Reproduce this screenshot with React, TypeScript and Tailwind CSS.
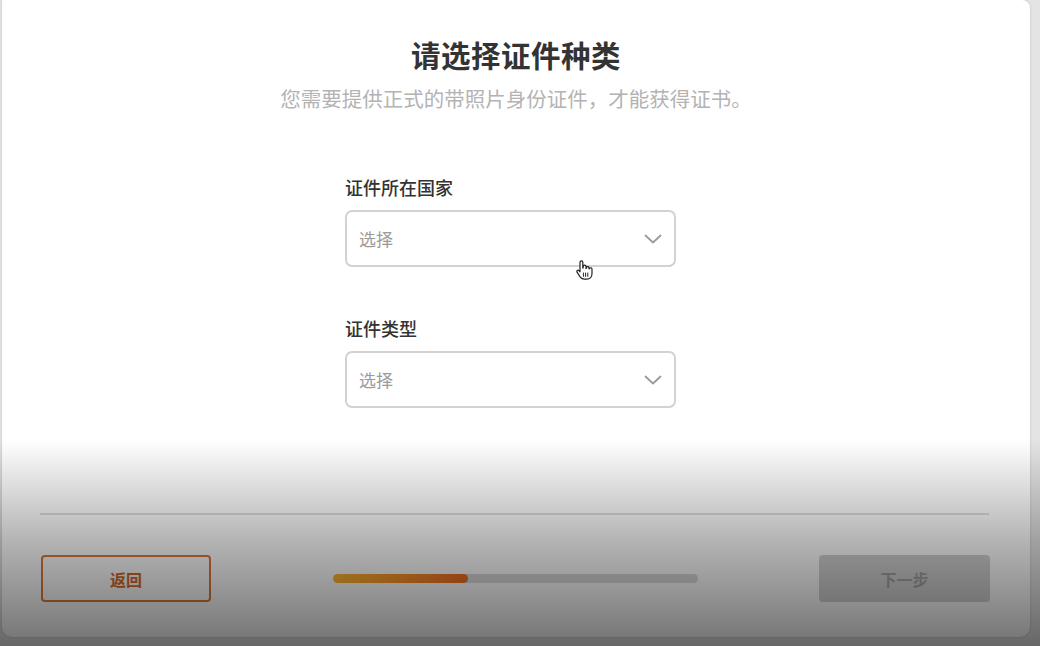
import React from "react";

const font = { fontFamily: '"Noto Sans CJK SC", "Noto Sans", sans-serif' };

const Chevron = () => (
  <svg width="18" height="10" viewBox="0 0 18 10" fill="none">
    <path d="M1.5 1.5L9 8.5L16.5 1.5" stroke="#9a9a9a" strokeWidth="1.8" strokeLinecap="round" strokeLinejoin="round" />
  </svg>
);

interface ISelectField {
  label: string;
}

const SelectField = ({ label }: ISelectField) => {
  return (
    <div className="flex flex-col">
      <label className="text-[18px] leading-[22px] text-[#333] font-medium">{label}</label>
      <div className="mt-[12px] h-[57px] w-[331px] rounded-[7px] border-2 border-[#d2d2d2] flex items-center justify-between pl-[12px] pr-[12px]">
        <span className="text-[17px] text-[#9b9b9b]">选择</span>
        <Chevron />
      </div>
    </div>
  );
};

const HandCursor = () => (
  <svg width="18" height="22" viewBox="0 0 18 22" fill="none">
    <path
      d="M5 10V3.2a1.4 1.4 0 0 1 2.8 0V9h.4V7.6a1.4 1.4 0 0 1 2.8 0V9.4h.3V8.6a1.4 1.4 0 0 1 2.7 0v1.2h.3a1.4 1.4 0 0 1 2.7 0v4.8c0 3.2-2 5.6-5.2 5.6H9.4c-2 0-3.2-.9-4.3-2.4L2 13.2a1.3 1.3 0 0 1 2-1.6L5 12.8z"
      fill="#fff"
      stroke="#222"
      strokeWidth="1.2"
      strokeLinejoin="round"
    />
    <path d="M8.4 14v3.4M10.6 14v3.4M12.8 14v3.4" stroke="#222" strokeWidth="1" strokeLinecap="round" />
  </svg>
);

export default function App() {
  return (
    <div className="relative w-[1040px] h-[646px] overflow-hidden bg-[#e4e4e4] pl-[2px] pr-[10px] pb-[9px]" style={font}>
      <div className="relative h-full bg-white rounded-b-[10px] rounded-tr-[8px] shadow-[0_0_3px_rgba(0,0,0,0.15)] flex flex-col">
        <div className="flex flex-col items-center pt-[34px]">
          <h1 className="text-[29.5px] leading-[40px] font-bold text-[#333] tracking-[0.5px]">请选择证件种类</h1>
          <p className="mt-[10px] text-[20.5px] leading-[28px] text-[#b3b3b3]">
            您需要提供正式的带照片身份证件，才能获得证书。
          </p>
        </div>

        <div className="ml-[343px] mt-[64px] flex flex-col gap-[50px]">
          <SelectField label="证件所在国家" />
          <SelectField label="证件类型" />
        </div>

        <div className="mt-auto ml-[38px] mr-[41px] border-t-2 border-[#e0e0e0]" />
        <div className="flex items-center justify-between pl-[39px] pr-[40px] pt-[40px] pb-[35px]">
          <button className="w-[170px] h-[47px] rounded-[4px] border-2 border-[#dd7a3a] text-[#d26a2c] text-[16px] font-semibold">
            返回
          </button>
          <div className="w-[365px] h-[9px] rounded-full bg-[#dadada] overflow-hidden">
            <div className="h-full w-[37%] rounded-full bg-gradient-to-r from-[#ffb630] to-[#f06c22]" />
          </div>
          <button className="w-[171px] h-[47px] rounded-[4px] bg-[#d2d2d2] text-[#a3a3a3] text-[16px] font-semibold">
            下一步
          </button>
        </div>

        <div className="absolute left-[573px] top-[259px]">
          <HandCursor />
        </div>
      </div>

      <div className="pointer-events-none absolute inset-x-0 bottom-0 h-[206px] bg-gradient-to-b from-[rgba(0,0,0,0)] via-[rgba(0,0,0,0.3)] to-[rgba(0,0,0,0.55)]" />
    </div>
  );
}
